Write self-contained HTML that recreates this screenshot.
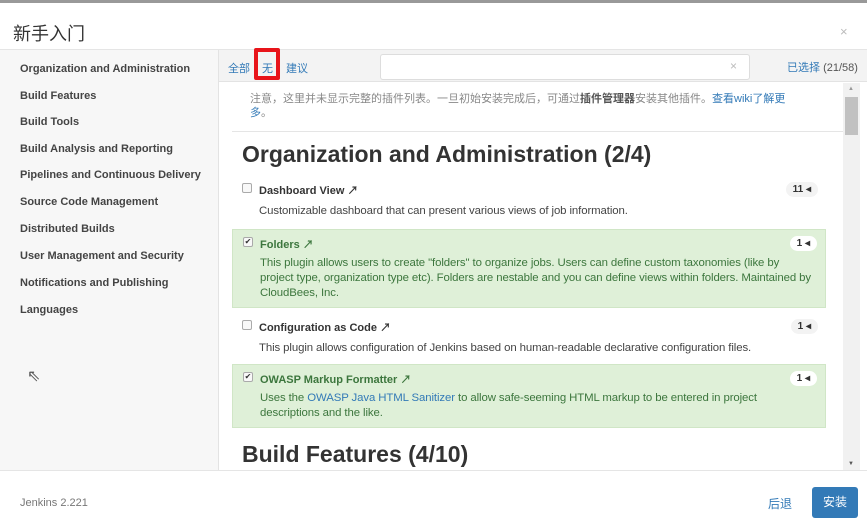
<!DOCTYPE html>
<html><head><meta charset="utf-8"><style>
*{box-sizing:border-box;margin:0;padding:0}
body{width:867px;height:532px;overflow:hidden;background:#fff;font-family:"Liberation Sans","Noto Sans CJK SC",sans-serif;position:relative;color:#333}
.abs{position:absolute}
.top{left:0;top:0;width:867px;height:3px;background:#999}
.side{left:0;top:50px;width:219px;height:420px;background:#f7f7f7;border-right:1px solid #e3e3e3}
.side div{position:absolute;left:20px;font-size:11px;font-weight:bold;color:#444}
.tb{left:219px;top:50px;width:648px;height:32px;background:#f3f3f3;border-bottom:1px solid #e3e3e3}
a,.lnk{color:#337ab7;text-decoration:none}
.item{position:absolute;left:232px;width:594px}
.green{background:#dff0d8;border:1px solid #d0e6c6}
.ttl{position:absolute;left:27px;font-size:11px;font-weight:bold;color:#333}
.green .ttl{color:#3c763d}
.desc{position:absolute;left:27px;font-size:11.4px;line-height:15px;color:#444;white-space:nowrap;letter-spacing:-0.1px}
.green .desc{color:#3c763d}
.cb{position:absolute;left:10px;width:10px;height:10px;border:1px solid #aaa;border-radius:2px;background:#f8f8f8;font-size:8px;line-height:8px;text-align:center}
.badge{position:absolute;right:8px;font-size:10px;font-weight:bold;background:#f3f3f3;border-radius:9px;padding:2px 7px;color:#333}
.green .badge{background:#fff}
h2{position:absolute;left:242px;font-size:23px;font-weight:bold;color:#333}
</style></head><body>
<div class="abs top"></div>
<div class="abs" style="left:13px;top:20px;font-size:18px;color:#333">新手入门</div>
<div class="abs" style="left:840px;top:24px;font-size:13px;color:#bbb">×</div>
<div class="abs" style="left:0;top:49px;width:867px;height:1px;background:#e5e5e5"></div>
<div class="abs side">
<div style="top:13px">Organization and Administration</div>
<div style="top:40px">Build Features</div>
<div style="top:66px">Build Tools</div>
<div style="top:93px">Build Analysis and Reporting</div>
<div style="top:119px">Pipelines and Continuous Delivery</div>
<div style="top:146px">Source Code Management</div>
<div style="top:173px">Distributed Builds</div>
<div style="top:200px">User Management and Security</div>
<div style="top:227px">Notifications and Publishing</div>
<div style="top:254px">Languages</div>
</div>
<div class="abs" style="left:27px;top:366px;font-size:16px;color:#555">⇖</div>
<div class="abs tb"></div>
<div class="abs lnk" style="left:228px;top:60px;font-size:11px">全部</div>
<div class="abs lnk" style="left:262px;top:60px;font-size:11px">无</div>
<div class="abs" style="left:254px;top:48px;width:26px;height:32px;border:4px solid #e8141a;border-radius:2px"></div>
<div class="abs lnk" style="left:286px;top:60px;font-size:11px">建议</div>
<div class="abs" style="left:380px;top:54px;width:370px;height:26px;background:#fff;border:1px solid #ddd;border-radius:3px"></div>
<div class="abs" style="left:730px;top:59px;font-size:12px;color:#bbb">×</div>
<div class="abs" style="left:787px;top:59px;font-size:11px;color:#337ab7">已选择 <span style="color:#555">(21/58)</span></div>
<div class="abs" style="left:843px;top:83px;width:17px;height:387px;background:#f1f1f1"></div>
<div class="abs" style="left:845px;top:97px;width:13px;height:38px;background:#c1c1c1"></div>
<div class="abs" style="left:848px;top:86px;font-size:6px;color:#999">▲</div>
<div class="abs" style="left:848px;top:461px;font-size:6px;color:#555">▼</div>
<div class="abs" style="left:250px;top:92px;width:570px;font-size:11px;line-height:14px;color:#888">注意，这里并未显示完整的插件列表。一旦初始安装完成后，可通过<b style="color:#555">插件管理器</b>安装其他插件。<a>查看wiki了解更<br>多</a>。</div>
<div class="abs" style="left:232px;top:131px;width:611px;height:1px;background:#e5e5e5"></div>
<h2 style="top:141px">Organization and Administration (2/4)</h2>
<div class="item" style="top:178px;height:44px">
<div class="cb" style="top:5px"></div><div class="ttl" style="top:4px">Dashboard View ↗</div><div class="badge" style="top:4px">11 ◂</div>
<div class="desc" style="top:26px">Customizable dashboard that can present various views of job information.</div></div>
<div class="item green" style="top:229px;height:79px">
<div class="cb" style="top:7px">✔</div><div class="ttl" style="top:6px">Folders ↗</div><div class="badge" style="top:6px">1 ◂</div>
<div class="desc" style="top:26px">This plugin allows users to create "folders" to organize jobs. Users can define custom taxonomies (like by<br>project type, organization type etc). Folders are nestable and you can define views within folders. Maintained by<br>CloudBees, Inc.</div></div>
<div class="item" style="top:315px;height:44px">
<div class="cb" style="top:5px"></div><div class="ttl" style="top:4px">Configuration as Code ↗</div><div class="badge" style="top:4px">1 ◂</div>
<div class="desc" style="top:26px">This plugin allows configuration of Jenkins based on human-readable declarative configuration files.</div></div>
<div class="item green" style="top:364px;height:64px">
<div class="cb" style="top:7px">✔</div><div class="ttl" style="top:6px">OWASP Markup Formatter ↗</div><div class="badge" style="top:6px">1 ◂</div>
<div class="desc" style="top:26px">Uses the <a>OWASP Java HTML Sanitizer</a> to allow safe-seeming HTML markup to be entered in project<br>descriptions and the like.</div></div>
<h2 style="top:441px">Build Features (4/10)</h2>
<div class="abs" style="left:0;top:470px;width:867px;height:1px;background:#e5e5e5"></div>
<div class="abs" style="left:20px;top:497px;font-size:11px;color:#777">Jenkins 2.221</div>
<div class="abs lnk" style="left:768px;top:495px;font-size:12px">后退</div>
<div class="abs" style="left:812px;top:487px;width:46px;height:31px;background:#337ab7;border-radius:3px;color:#fff;font-size:12px;text-align:center;line-height:31px">安装</div>
</body></html>
